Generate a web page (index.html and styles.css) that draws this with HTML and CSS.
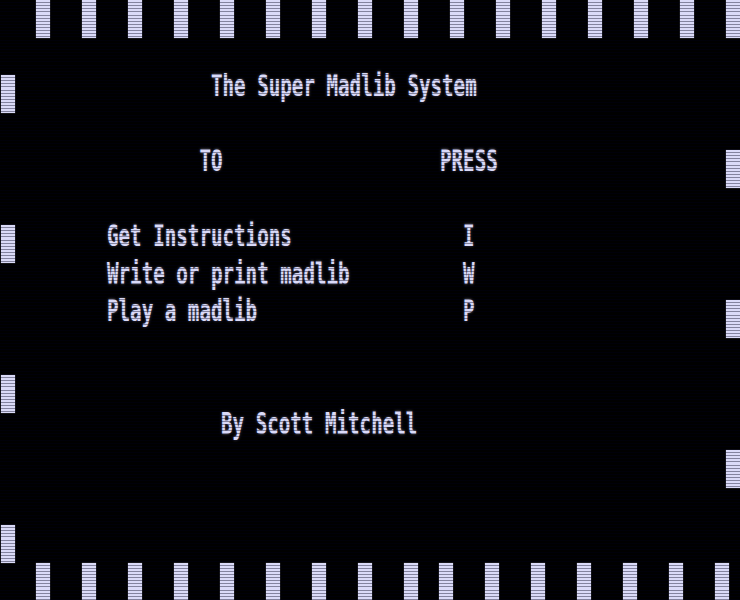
FILE: index.html
```html
<!DOCTYPE html>
<html lang="en">
<head>
  <meta charset="UTF-8" />
  <title>The Super Madlib System</title>
  <link rel="stylesheet" href="styles.css">
</head>
<body>

  <div class="screen">

    <!-- top border of inverse blocks -->
    <div class="edge top">
      <span class="bar"></span><span class="bar"></span><span class="bar"></span><span class="bar"></span>
      <span class="bar"></span><span class="bar"></span><span class="bar"></span><span class="bar"></span>
      <span class="bar"></span><span class="bar"></span><span class="bar"></span><span class="bar"></span>
      <span class="bar"></span><span class="bar"></span><span class="bar"></span><span class="bar"></span>
    </div>

    <div class="middle">
      <div class="side left">
        <span class="bar"></span><span class="bar"></span><span class="bar"></span><span class="bar"></span>
      </div>

      <div class="text">
        <div class="line title">The Super Madlib System</div>

        <div class="line row head">
          <span class="label">TO</span>
          <span class="key">PRESS</span>
        </div>

        <div class="line row first">
          <span class="label">Get Instructions</span>
          <span class="key">I</span>
        </div>
        <div class="line row">
          <span class="label">Write or print madlib</span>
          <span class="key">W</span>
        </div>
        <div class="line row">
          <span class="label">Play a madlib</span>
          <span class="key">P</span>
        </div>

        <div class="line credit">By Scott Mitchell</div>
      </div>

      <div class="side right">
        <span class="bar"></span><span class="bar"></span><span class="bar"></span>
      </div>
    </div>

    <!-- bottom border, second run sits a little to the left -->
    <div class="edge bottom">
      <div class="group">
        <span class="bar"></span><span class="bar"></span><span class="bar"></span>
        <span class="bar"></span><span class="bar"></span><span class="bar"></span>
        <span class="bar"></span><span class="bar"></span><span class="bar"></span>
      </div>
      <div class="group">
        <span class="bar"></span><span class="bar"></span><span class="bar"></span>
        <span class="bar"></span><span class="bar"></span><span class="bar"></span>
        <span class="bar"></span>
      </div>
    </div>

  </div>

</body>
</html>
```

FILE: styles.css
```css
body {
  margin: 0;
  background-color: #000;
}

/* 16 text rows of 37.5px on a 740x600 screen */
.screen {
  position: relative;
  width: 740px;
  height: 600px;
  display: flex;
  flex-direction: column;
  overflow: hidden;
  background-color: #000;
  color: #dadaf8;
  font-family: "DejaVu Sans Mono", "Liberation Mono", monospace;
  font-weight: bold;
  font-size: 19.2px;
}

/* CRT scanlines over everything */
.screen::after {
  content: "";
  position: absolute;
  inset: 0;
  pointer-events: none;
  background: repeating-linear-gradient(
    to bottom,
    rgba(0, 0, 0, 0) 0,
    rgba(0, 0, 0, 0) 2px,
    rgba(0, 0, 24, 0.4) 2px,
    rgba(0, 0, 24, 0.4) 3.125px
  );
}

.bar {
  display: block;
  flex: none;
  width: 14px;
  height: 37.5px;
  background-color: #dadaf8;
  box-shadow: 0 0 1px rgba(218, 218, 248, 0.6);
}

.edge {
  display: flex;
  flex: none;
  height: 37.5px;
  padding-left: 36px;
  gap: 32px;
}

.edge.bottom {
  gap: 21px;
}

.edge .group {
  display: flex;
  gap: 32px;
}

.middle {
  flex: 1;
  display: flex;
}

.side {
  display: flex;
  flex-direction: column;
  gap: 112.5px;
  width: 14px;
}

.side.left {
  margin-left: 1px;
  padding-top: 37.5px;
}

.side.right {
  padding-top: 112.5px;
}

.text {
  flex: 1;
}

/* tall, narrow 40-column style glyphs */
.line {
  height: 37.5px;
  line-height: 19px;
  white-space: pre;
  transform: translateY(-4px) scaleY(1.57);
  transform-origin: 0 0;
  text-shadow: 0 0 2px rgba(218, 218, 248, 0.45);
}

.title {
  margin-top: 37.5px;
  padding-left: 196px;
}

.row {
  display: flex;
  padding-left: 92px;
}

.row .label {
  box-sizing: border-box;
  flex: none;
  width: 333px;
}

.row .key {
  flex: none;
  width: 5ch;
  text-align: center;
}

.head {
  margin-top: 37.5px;
}

.head .label {
  padding-left: 8ch;
}

.row.first {
  margin-top: 37.5px;
}

.credit {
  margin-top: 75px;
  padding-left: 206px;
}
```
